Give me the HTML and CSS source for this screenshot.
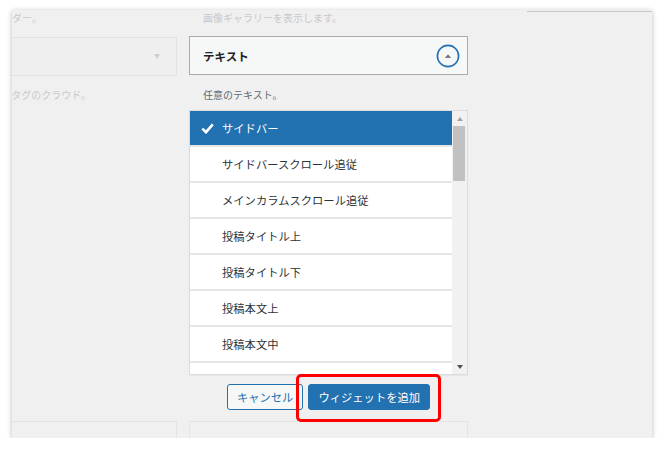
FILE: index.html
```html
<!DOCTYPE html>
<html lang="ja">
<head>
<meta charset="utf-8">
<title>ウィジェットを追加</title>
<link rel="stylesheet" href="styles.css">
</head>
<body>
<div class="panel">
  <div class="grid">
    <p class="desc faded row1 col1">投稿の月別カレンダー。</p>
    <div class="select-faded row2 col1"><span class="tri-faded"></span></div>
    <p class="desc faded row3 col1">よく使われているタグのクラウド。</p>
    <div class="card row6 col1"></div>

    <p class="desc faded row1 col2">画像ギャラリーを表示します。</p>
    <div class="widget-head row2 col2">
      <span class="widget-title">テキスト</span>
      <svg class="toggle" width="24" height="24" viewBox="0 0 24 24">
        <circle cx="12" cy="12" r="10.6" fill="none" stroke="#2271b1" stroke-width="1.6"/>
        <path d="M8.8 14 L15.2 14 L12 10.2 Z" fill="#787c82"/>
      </svg>
    </div>
    <p class="desc muted row3 col2 desc-gap">任意のテキスト。</p>
    <div class="list row4 col2">
      <div class="items">
        <div class="item selected">
          <svg class="check" width="13" height="11" viewBox="0 0 13 11"><path d="M1.3 5.6 L5 9.2 L11.8 1.4" fill="none" stroke="#fff" stroke-width="2.6" stroke-linejoin="miter"/></svg>
          サイドバー
        </div>
        <div class="item">サイドバースクロール追従</div>
        <div class="item">メインカラムスクロール追従</div>
        <div class="item">投稿タイトル上</div>
        <div class="item">投稿タイトル下</div>
        <div class="item">投稿本文上</div>
        <div class="item">投稿本文中</div>
        <div class="item">投稿本文下</div>
      </div>
      <div class="scrollbar">
        <div class="sb-btn"><span class="tri-up"></span></div>
        <div class="thumb"></div>
        <div class="sb-btn sb-bottom"><span class="tri-down"></span></div>
      </div>
    </div>
    <div class="actions row5 col2">
      <button class="btn btn-secondary">キャンセル</button>
      <button class="btn btn-primary">ウィジェットを追加</button>
      <div class="highlight"></div>
    </div>
    <div class="card row6 col2"><span class="card-text">ブロック</span></div>

    <div class="filler"><div class="topline"></div></div>
  </div>
</div>
</body>
</html>
```
FILE: styles.css
```css
html, body {
  margin: 0;
  background: #ffffff;
}
body {
  font-family: "Noto Sans CJK JP", "Noto Sans", sans-serif;
  color: #2c3338;
}
.panel {
  margin: 10px 12px 0;
  width: 640px;
  height: 428px;
  background: #f0f0f0;
  box-shadow: 0 1px 5px rgba(0, 0, 0, 0.28);
  overflow: hidden;
}
.grid {
  display: grid;
  margin-left: -94px;
  grid-template-columns: 259px 279px 1fr;
  grid-template-rows: auto auto auto auto auto 1fr;
  column-gap: 12px;
  align-items: start;
}
.col1 { grid-column: 1; }
.col2 { grid-column: 2; }
.row1 { grid-row: 1; }
.row2 { grid-row: 2; }
.row3 { grid-row: 3; }
.row4 { grid-row: 4; }
.row5 { grid-row: 5; }
.row6 { grid-row: 6; }

.desc {
  margin: 0;
  padding-left: 14px;
  font-size: 10px;
  line-height: 14px;
  white-space: nowrap;
}
.row1.desc {
  padding-top: 1px;
  margin-bottom: 11px;
}
.row3.desc {
  margin-top: 12px;
  margin-bottom: 8px;
}
.faded { color: #c9c9c9; }
.muted { color: #646970; }

.select-faded {
  box-sizing: border-box;
  height: 39px;
  margin-top: 1px;
  border: 1px solid #e3e3e3;
  background: #efefef;
  display: flex;
  align-items: center;
  justify-content: flex-end;
  padding-right: 16px;
}
.tri-faded {
  width: 0;
  height: 0;
  border-left: 3.5px solid transparent;
  border-right: 3.5px solid transparent;
  border-top: 5px solid #cfcfcf;
}

.widget-head {
  box-sizing: border-box;
  height: 39px;
  border: 1px solid #a7aaad;
  background: #f6f7f7;
  display: flex;
  align-items: center;
  justify-content: space-between;
  padding: 0 7px 0 13px;
}
.widget-title {
  font-size: 11.5px;
  font-weight: 700;
  color: #1d2327;
}
.toggle { display: block; }

.list {
  box-sizing: border-box;
  height: 265px;
  border: 1px solid #dcdcde;
  background: #ffffff;
  display: flex;
  box-shadow: 0 1px 1px rgba(0, 0, 0, 0.04);
}
.items {
  flex: 1;
  overflow: hidden;
}
.item {
  box-sizing: border-box;
  height: 36px;
  border-bottom: 2px solid #e6e6e6;
  display: flex;
  align-items: center;
  padding-left: 32px;
  font-size: 11.3px;
  color: #2c3338;
  white-space: nowrap;
}
.item.selected {
  background: #2271b1;
  color: #ffffff;
  padding-left: 11px;
}
.check {
  margin-right: 8px;
  flex: none;
}
.scrollbar {
  width: 15px;
  background: #f1f1f1;
  display: flex;
  flex-direction: column;
}
.sb-btn {
  height: 15px;
  display: flex;
  align-items: center;
  justify-content: center;
}
.sb-bottom { margin-top: auto; }
.tri-up {
  width: 0;
  height: 0;
  border-left: 3.5px solid transparent;
  border-right: 3.5px solid transparent;
  border-bottom: 4px solid #a3a3a3;
}
.tri-down {
  width: 0;
  height: 0;
  border-left: 3.5px solid transparent;
  border-right: 3.5px solid transparent;
  border-top: 4px solid #505050;
}
.thumb {
  height: 55px;
  margin: 0 2px 0 1px;
  background: #c1c1c1;
}

.actions {
  position: relative;
  margin-top: 9px;
  display: flex;
  justify-content: center;
  gap: 5px;
}
.btn {
  box-sizing: border-box;
  height: 26px;
  padding: 0 9px;
  font-family: "Noto Sans CJK JP", "Noto Sans", sans-serif;
  font-size: 11.3px;
  line-height: 24px;
  border-radius: 3px;
  white-space: nowrap;
}
.btn-secondary {
  background: #f6f7f7;
  border: 1px solid #2271b1;
  color: #2271b1;
}
.btn-primary {
  background: #2271b1;
  border: 1px solid #2271b1;
  color: #ffffff;
}
.highlight {
  position: absolute;
  top: -10px;
  left: 107px;
  width: 145px;
  height: 48px;
  box-sizing: border-box;
  border: 3px solid #ff0000;
  border-radius: 5px;
}

.card {
  box-sizing: border-box;
  margin-top: 11px;
  height: 40px;
  border: 1px solid #e4e4e4;
  background: #f0f0f0;
  padding: 10px 13px 0;
}
.card-text {
  font-size: 11.3px;
  color: #cdcdcd;
}

.filler {
  grid-column: 3;
  grid-row: 1 / -1;
  align-self: stretch;
}
.topline {
  margin-left: 47px;
  margin-top: 1px;
  border-top: 1px solid #c6c6c6;
}
```
